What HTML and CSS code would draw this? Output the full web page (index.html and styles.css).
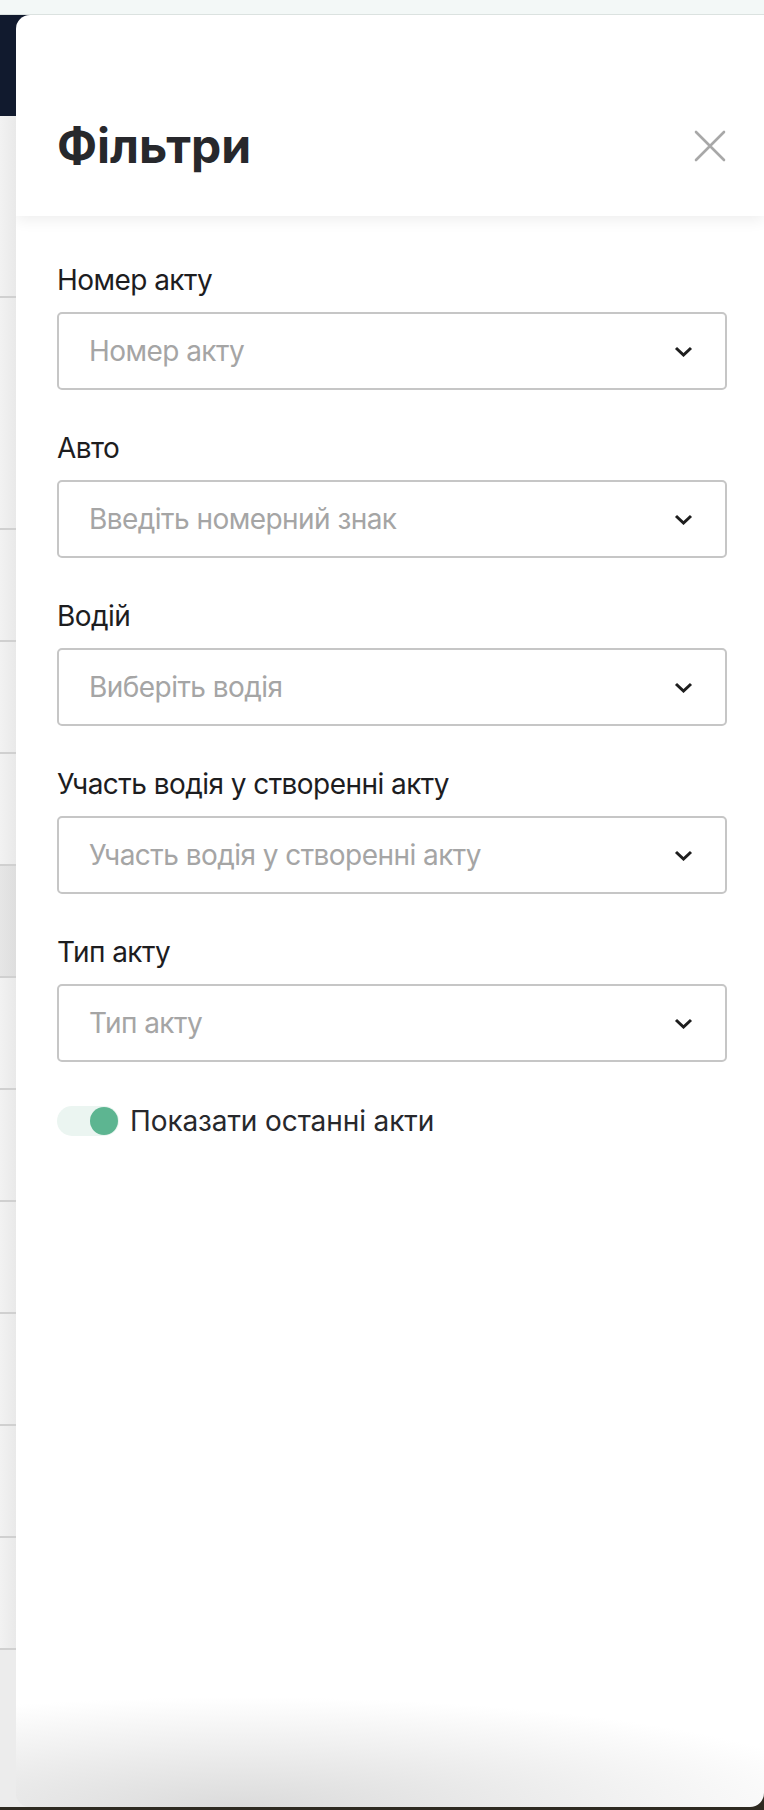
FILE: index.html
```html
<!DOCTYPE html>
<html lang="uk">
<head>
<meta charset="utf-8">
<title>Фільтри</title>
<link rel="stylesheet" href="styles.css">
</head>
<body>
<div class="topbar"></div>
<div class="main">
  <div class="leftcol">
    <div class="navy"></div>
    <div class="row row-first"></div>
    <div class="row row-second"></div>
    <div class="row"></div>
    <div class="row"></div>
    <div class="row"></div>
    <div class="row row-hover"></div>
    <div class="row"></div>
    <div class="row"></div>
    <div class="row"></div>
    <div class="row"></div>
    <div class="row"></div>
    <div class="row"></div>
  </div>
  <aside class="panel">
    <header class="panel-header">
      <h1 class="panel-title">Фільтри</h1>
      <button class="close-btn" aria-label="Закрити">
        <svg width="32" height="32" viewBox="0 0 32 32"><path d="M2 2 L30 30 M30 2 L2 30" stroke="#a8a8a8" stroke-width="2.6" stroke-linecap="round" fill="none"/></svg>
      </button>
    </header>
    <form class="filters">
      <div class="field">
        <label class="field-label">Номер акту</label>
        <div class="select"><span class="placeholder">Номер акту</span>
          <svg class="chev" width="19" height="11" viewBox="0 0 19 11"><path d="M2 2 L9.5 9 L17 2" stroke="#1e1e1e" stroke-width="3" fill="none"/></svg></div>
      </div>
      <div class="field">
        <label class="field-label">Авто</label>
        <div class="select"><span class="placeholder">Введіть номерний знак</span>
          <svg class="chev" width="19" height="11" viewBox="0 0 19 11"><path d="M2 2 L9.5 9 L17 2" stroke="#1e1e1e" stroke-width="3" fill="none"/></svg></div>
      </div>
      <div class="field">
        <label class="field-label">Водій</label>
        <div class="select"><span class="placeholder">Виберіть водія</span>
          <svg class="chev" width="19" height="11" viewBox="0 0 19 11"><path d="M2 2 L9.5 9 L17 2" stroke="#1e1e1e" stroke-width="3" fill="none"/></svg></div>
      </div>
      <div class="field">
        <label class="field-label">Участь водія у створенні акту</label>
        <div class="select"><span class="placeholder">Участь водія у створенні акту</span>
          <svg class="chev" width="19" height="11" viewBox="0 0 19 11"><path d="M2 2 L9.5 9 L17 2" stroke="#1e1e1e" stroke-width="3" fill="none"/></svg></div>
      </div>
      <div class="field">
        <label class="field-label">Тип акту</label>
        <div class="select"><span class="placeholder">Тип акту</span>
          <svg class="chev" width="19" height="11" viewBox="0 0 19 11"><path d="M2 2 L9.5 9 L17 2" stroke="#1e1e1e" stroke-width="3" fill="none"/></svg></div>
      </div>
      <div class="toggle-row">
        <span class="toggle"><span class="knob"></span></span>
        <span class="toggle-label">Показати останні акти</span>
      </div>
    </form>
  </aside>
</div>
</body>
</html>
```
FILE: styles.css
```css
* { box-sizing: border-box; }
html, body { margin: 0; padding: 0; }
body {
  width: 764px;
  height: 1810px;
  overflow: hidden;
  background: #2e2a21;
  font-family: Inter, "Noto Sans", sans-serif;
}
.topbar {
  height: 15px;
  background: #f3f8f7;
  border-bottom: 1px solid #dbe2e0;
}
.main {
  display: flex;
  height: 1792px;
  background:
    linear-gradient(to right, transparent 50%, #2e2a21 50%) right bottom / 40px 20px no-repeat,
    linear-gradient(#111a2e 0 101px, #ececec 101px);
}
.leftcol {
  width: 16px;
  flex: none;
  display: flex;
  flex-direction: column;
}
.navy { height: 101px; background: #111a2e; flex: none; }
.row {
  flex: none;
  height: 112px;
  background: linear-gradient(to right, #f2f2f2, #e9e9e9);
  border-bottom: 2px solid #d0d0d0;
}
.row-first { height: 182px; }
.row-second { height: 232px; }
.row-hover { background: linear-gradient(to right, #e6e6e6, #dedede); }

.panel {
  flex: 1;
  display: flex;
  flex-direction: column;
  background:
    radial-gradient(ellipse 620px 110px at 30% 100%, rgba(215,215,215,0.9), rgba(255,255,255,0) 100%),
    #ffffff;
  border-radius: 14px 0 14px 14px;
  overflow: hidden;
}
.panel-header {
  height: 201px;
  flex: none;
  display: flex;
  align-items: center;
  justify-content: space-between;
  padding: 102px 38px 41px 41px;
  box-shadow: 0 4px 14px rgba(0, 0, 0, 0.07);
  position: relative;
  z-index: 1;
}
.panel-title {
  margin: 0;
  font-size: 48px;
  line-height: 58px;
  font-weight: 700;
  color: #27282c;
}
.close-btn {
  width: 32px;
  height: 32px;
  padding: 0;
  border: 0;
  background: none;
  display: flex;
}
.filters {
  display: flex;
  flex-direction: column;
  padding: 47px 37px 0 41px;
}
.field { display: flex; flex-direction: column; margin-bottom: 41px; }
.field:nth-child(5) { margin-bottom: 42px; }
.field-label {
  font-size: 28px;
  line-height: 34px;
  letter-spacing: -0.55px;
  color: #1d1d1f;
  margin-bottom: 15px;
}
.select {
  height: 78px;
  border: 2px solid #c6c6c6;
  border-radius: 5px;
  display: flex;
  align-items: center;
  justify-content: space-between;
  padding: 0 32px 0 30px;
}
.placeholder {
  font-size: 28px;
  letter-spacing: -0.55px;
  color: #a5a5a5;
}
.chev { flex: none; }
.toggle-row {
  display: flex;
  align-items: center;
  gap: 11px;
}
.toggle {
  width: 62px;
  height: 30px;
  border-radius: 15px;
  background: #ebf5f1;
  display: flex;
  align-items: center;
  justify-content: flex-end;
  padding-right: 1px;
}
.knob {
  width: 28px;
  height: 28px;
  border-radius: 50%;
  background: #5db591;
}
.toggle-label {
  font-size: 28px;
  letter-spacing: -0.1px;
  color: #27282c;
}
```
